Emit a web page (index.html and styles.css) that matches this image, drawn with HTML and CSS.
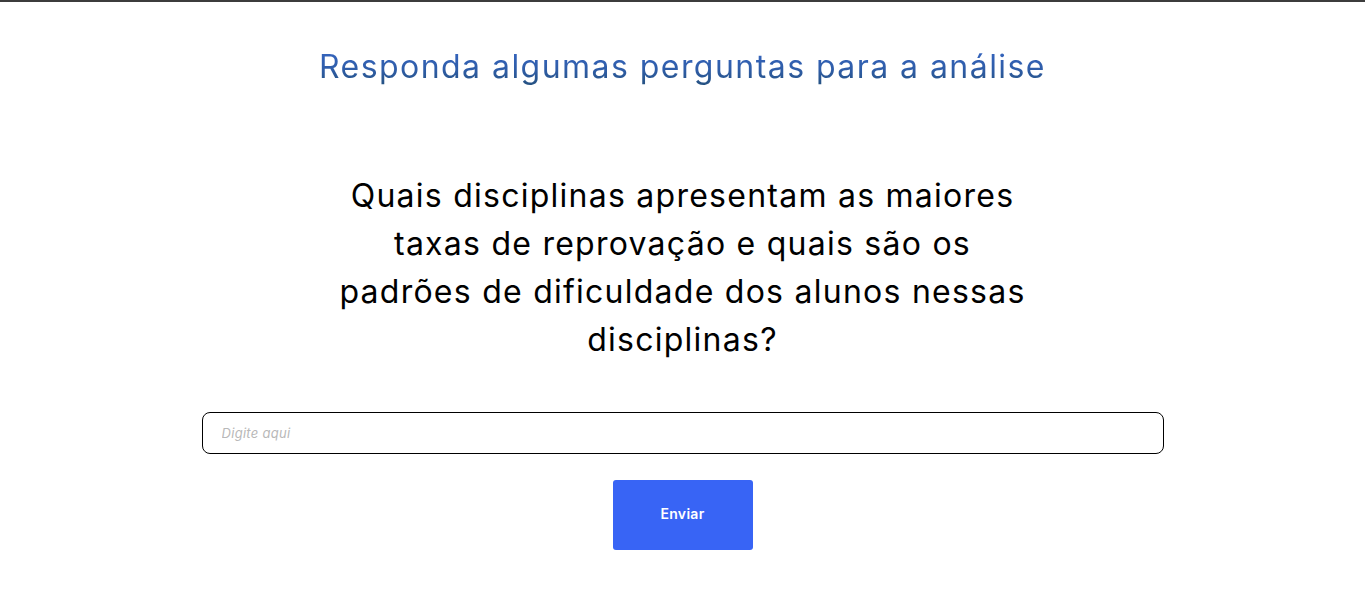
FILE: index.html
```html
<!DOCTYPE html>
<html lang="pt-BR">
<head>
<meta charset="utf-8">
<title>Análise</title>
<link rel="stylesheet" href="styles.css">
</head>
<body>
<main class="page">
  <h1 class="title">Responda algumas perguntas para a análise</h1>
  <p class="question">Quais disciplinas apresentam as maiores taxas de reprovação e quais são os padrões de dificuldade dos alunos nessas disciplinas?</p>
  <form class="answer-form">
    <input class="answer-input" type="text" placeholder="Digite aqui">
    <button class="send-btn" type="button">Enviar</button>
  </form>
</main>
</body>
</html>
```

FILE: styles.css
```css
html, body {
  margin: 0;
  padding: 0;
  background: #ffffff;
}
body {
  border-top: 2px solid #3c3c3c;
  font-family: "Inter", "Noto Sans", sans-serif;
}
.page {
  display: flex;
  flex-direction: column;
  align-items: center;
  padding-top: 41px;
}
.title {
  margin: 0;
  font-size: 32px;
  font-weight: 400;
  line-height: 48px;
  letter-spacing: 1.45px;
  background: linear-gradient(to bottom, #3767c8 0%, #2f5da8 55%, #214d72 100%);
  -webkit-background-clip: text;
  background-clip: text;
  color: transparent;
}
.question {
  margin: 81px 0 0;
  width: 700px;
  text-align: center;
  font-size: 32px;
  line-height: 48px;
  letter-spacing: 1.25px;
  color: #000000;
}
.answer-form {
  margin-top: 48px;
  display: flex;
  flex-direction: column;
  align-items: center;
  gap: 26px;
}
.answer-input {
  box-sizing: border-box;
  width: 962px;
  height: 42px;
  border: 1px solid #000000;
  border-radius: 8px;
  padding: 0 19px;
  font-family: inherit;
  font-size: 13px;
  letter-spacing: 0.3px;
  outline: none;
}
.answer-input::placeholder {
  color: #b8b8b8;
  font-style: italic;
}
.send-btn {
  width: 140px;
  height: 70px;
  padding: 0 0 3px;
  border: none;
  border-radius: 3px;
  background: #3864f5;
  color: #ffffff;
  font-family: inherit;
  font-size: 14px;
  font-weight: 600;
  letter-spacing: 0.3px;
  cursor: pointer;
}
```
